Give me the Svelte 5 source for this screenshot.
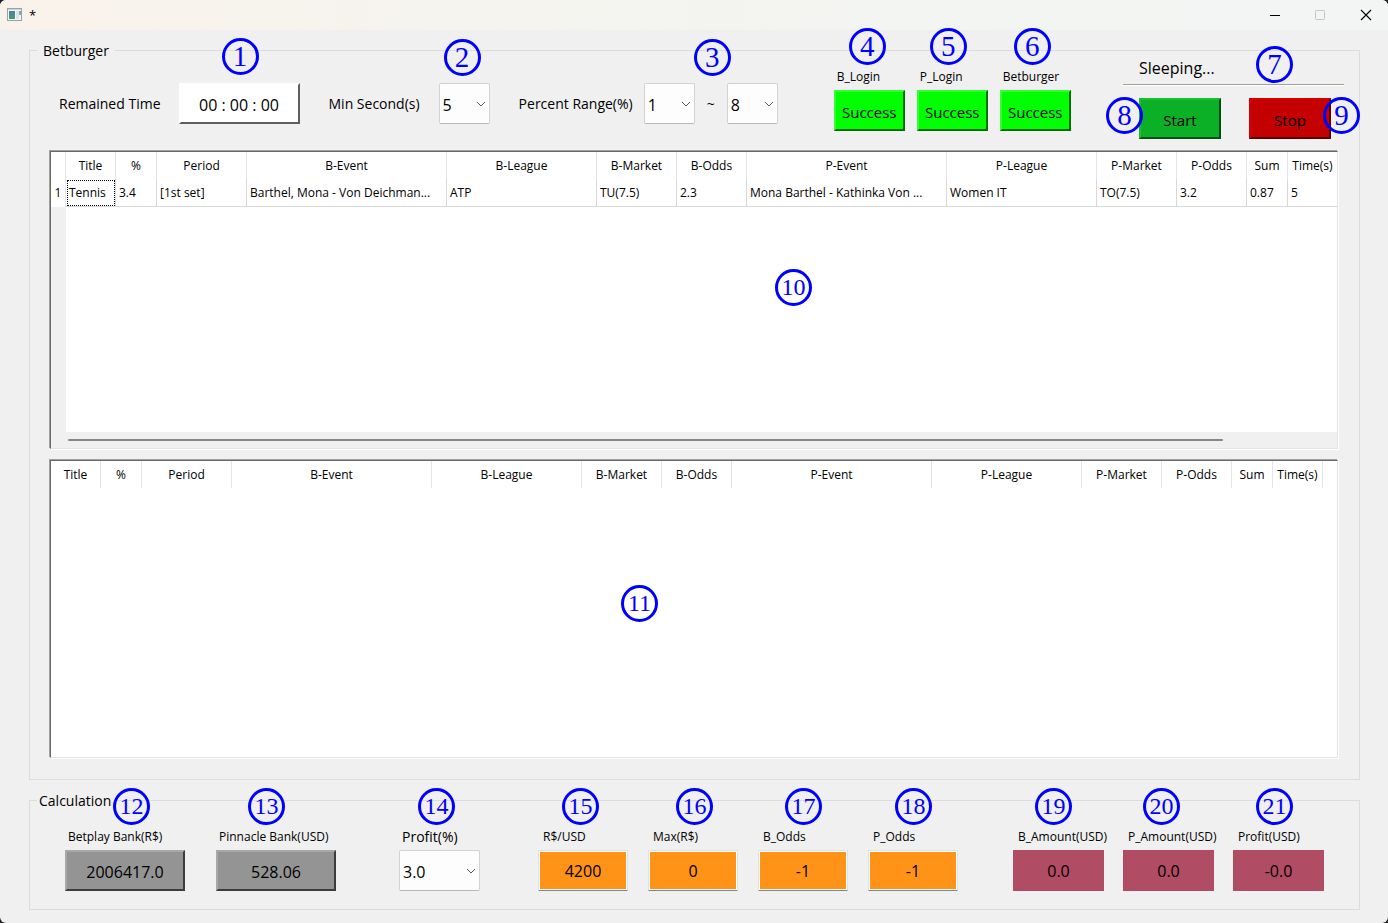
<script>
  const headings = ['Title', '%', 'Period', 'B-Event', 'B-League', 'B-Market', 'B-Odds', 'P-Event', 'P-League', 'P-Market', 'P-Odds', 'Sum', 'Time(s)'];
  const widths = [50, 41, 90, 200, 150, 80, 70, 200, 150, 80, 70, 41, 50];
  const rowHeadWidth = 15;
  const total = widths.reduce((sum, w) => sum + w, 0);
  const rows = [
    ['Tennis', '3.4', '[1st set]', 'Barthel, Mona - Von Deichman...', 'ATP', 'TU(7.5)', '2.3', 'Mona Barthel - Kathinka Von ...', 'Women IT', 'TO(7.5)', '3.2', '0.87', '5']
  ];

  // note: number of the callout, at: its left and top inside the field
  const logins = [
    { id: 'b-login', label: 'B_Login', note: 4, at: [15, -39] },
    { id: 'p-login', label: 'P_Login', note: 5, at: [13, -39] },
    { id: 'betburger', label: 'Betburger', note: 6, at: [14, -39] }
  ];
  const banks = [
    { id: 'betplay', label: 'Betplay Bank(R$)', value: '2006417.0', note: 12, at: [48, -39] },
    { id: 'pinnacle', label: 'Pinnacle Bank(USD)', value: '528.06', note: 13, at: [32, -39] }
  ];
  const stakes = [
    { id: 'rate', label: 'R$/USD', value: '4200', note: 15, at: [24, -39] },
    { id: 'max', label: 'Max(R$)', value: '0', note: 16, at: [28, -39] },
    { id: 'b-odds', label: 'B_Odds', value: '-1', note: 17, at: [27, -39] },
    { id: 'p-odds', label: 'P_Odds', value: '-1', note: 18, at: [27, -39] }
  ];
  const results = [
    { id: 'b-amount', label: 'B_Amount(USD)', value: '0.0', note: 19, at: [22, -39] },
    { id: 'p-amount', label: 'P_Amount(USD)', value: '0.0', note: 20, at: [20, -39] },
    { id: 'profit-usd', label: 'Profit(USD)', value: '-0.0', note: 21, at: [23, -39] }
  ];
</script>

{#snippet callout(n, at)}
  <span class="callout" class:wide={n > 9} style="left: {at[0]}px; top: {at[1]}px">{n}</span>
{/snippet}

{#snippet combo(id, value)}
  <span class="combo">
    <select {id}><option>{value}</option></select>
    <svg width="10" height="6" viewBox="0 0 10 6" aria-hidden="true"><path d="M1 1l4 4 4-4" fill="none" stroke="#555" /></svg>
  </span>
{/snippet}

<div class="window">
  <header>
    <svg width="16" height="14" viewBox="0 0 16 14" aria-hidden="true">
      <defs>
        <linearGradient id="pane" x1="0" y1="0" x2="0" y2="1">
          <stop offset="0" stop-color="#4a7fb0" /><stop offset="1" stop-color="#4f9a6c" />
        </linearGradient>
      </defs>
      <rect x=".5" y=".5" width="14" height="12" fill="#f2f4f5" stroke="#9aa2a8" />
      <rect x="1" y="1" width="13" height="1" fill="#c9d3da" />
      <rect x="2" y="3" width="6" height="8" fill="url(#pane)" />
      <rect x="9" y="3" width="3" height="8" fill="#dfe3e4" />
      <rect x="12" y="3" width="2" height="4" fill="url(#pane)" opacity=".7" />
    </svg>
    <span class="title">*</span>
    <div class="controls">
      <button aria-label="Minimize"><svg width="12" height="12" viewBox="0 0 12 12"><path d="M0 6.5h10" stroke="#000" /></svg></button>
      <button aria-label="Maximize" disabled><svg width="12" height="12" viewBox="0 0 12 12"><rect x=".5" y="1.5" width="9" height="9" rx="1" fill="none" stroke="#c3c5c5" /></svg></button>
      <button aria-label="Close"><svg width="12" height="12" viewBox="0 0 12 12"><path d="M1 1l10 10M11 1L1 11" stroke="#000" stroke-width="1.1" /></svg></button>
    </div>
  </header>

  <fieldset class="scanner">
    <legend>Betburger</legend>
    <div class="toolbar">
      <div class="setting time">
        <label for="remained">Remained Time</label>
        <div class="slot">
          <output id="remained" class="box clock">00 : 00 : 00</output>
          {@render callout(1, [43, -45])}
        </div>
      </div>
      <div class="setting seconds">
        <label for="min-second">Min Second(s)</label>
        <div class="slot">
          {@render combo('min-second', '5')}
          {@render callout(2, [5, -44])}
        </div>
      </div>
      <div class="setting percent">
        <label for="percent-from">Percent Range(%)</label>
        <div class="slot range">
          {@render combo('percent-from', '1')}
          <label for="percent-to">~</label>
          {@render combo('percent-to', '8')}
          {@render callout(3, [50, -44])}
        </div>
      </div>

      <div class="logins">
        {#each logins as f}
          <div class="field">
            <label for={f.id}>{f.label}</label>
            <output id={f.id} class="box success">Success</output>
            {@render callout(f.note, f.at)}
          </div>
        {/each}
      </div>

      <div class="run">
        <output class="state">Sleeping...</output>
        {@render callout(7, [133, -14])}
        <div class="actions">
          <div class="slot">
            <button class="box start">Start</button>
            {@render callout(8, [-33, -1])}
          </div>
          <div class="slot">
            <button class="box stop">Stop</button>
            {@render callout(9, [74, -1])}
          </div>
        </div>
      </div>
    </div>

    <div class="grids">
      <div class="sunken">
        <div class="view strip">
          <table style="width: {total + rowHeadWidth}px">
            <colgroup>
              <col style="width: {rowHeadWidth}px" />
              {#each widths as w}<col style="width: {w}px" />{/each}
            </colgroup>
            <thead>
              <tr><td></td>{#each headings as h}<th scope="col">{h}</th>{/each}</tr>
            </thead>
            <tbody>
              {#each rows as row, r}
                <tr>
                  <th scope="row">{r + 1}</th>
                  {#each row as cell, c}<td class:focus={r === 0 && c === 0}>{cell}</td>{/each}
                </tr>
              {/each}
            </tbody>
          </table>
        </div>
        <div class="scroll"><div class="thumb"></div></div>
        {@render callout(10, [724, 117])}
      </div>
      <div class="sunken">
        <div class="view">
          <table style="width: {total}px">
            <colgroup>
              {#each widths as w}<col style="width: {w}px" />{/each}
            </colgroup>
            <thead>
              <tr>{#each headings as h}<th scope="col">{h}</th>{/each}</tr>
            </thead>
          </table>
        </div>
        {@render callout(11, [570, 124])}
      </div>
    </div>
  </fieldset>

  <fieldset class="calculation">
    <legend>Calculation</legend>
    <div class="fields">
      <div class="group banks">
        {#each banks as f}
          <div class="field">
            <label for={f.id}>{f.label}</label>
            <output id={f.id} class="box bank">{f.value}</output>
            {@render callout(f.note, f.at)}
          </div>
        {/each}
      </div>
      <div class="field profit">
        <label for="profit">Profit(%)</label>
        {@render combo('profit', '3.0')}
        {@render callout(14, [19, -39])}
      </div>
      <div class="group stakes">
        {#each stakes as f}
          <div class="field">
            <label for={f.id}>{f.label}</label>
            <input id={f.id} class="box stake" value={f.value} />
            {@render callout(f.note, f.at)}
          </div>
        {/each}
      </div>
      <div class="group results">
        {#each results as f}
          <div class="field">
            <label for={f.id}>{f.label}</label>
            <output id={f.id} class="box result">{f.value}</output>
            {@render callout(f.note, f.at)}
          </div>
        {/each}
      </div>
    </div>
  </fieldset>
</div>

<style>
  :global(body) {
    margin: 0;
    background: #222;
  }
  .window, .window :is(button, input, select) {
    font-family: 'Open Sans', 'Segoe UI', sans-serif;
    color: #000;
  }
  .window {
    box-sizing: border-box;
    display: flex;
    flex-direction: column;
    gap: 10px;
    min-height: 100vh;
    padding-bottom: 13px;
    border-radius: 6px;
    background: #f0f0f0;
    overflow: hidden;
    font-size: 14px;
  }
  .window * {
    box-sizing: border-box;
  }

  header {
    display: flex;
    align-items: center;
    height: 30px;
    padding-left: 7px;
    background: linear-gradient(90deg, #f9f2eb, #f3f4f0 50%, #f2f5f4);
  }
  .title {
    margin-left: 6px;
    font-size: 13px;
  }
  .controls {
    display: flex;
    margin-left: auto;
  }
  .controls button {
    display: grid;
    place-items: center;
    width: 45px;
    height: 28px;
    padding: 0;
    border: 0;
    background: none;
  }

  fieldset {
    min-width: 0;
    margin: 0 28px 0 29px;
    padding: 0;
    border: 1px solid #dcdcdc;
  }
  legend {
    height: 20px;
    margin-left: 7px;
    padding: 0 6px;
    line-height: 22px;
  }
  .calculation legend {
    padding: 0 2px;
  }
  .scanner {
    flex: 1;
    padding: 0 20px 20px 19px;
  }
  .scanner legend {
    margin-left: -12px;
  }

  .toolbar {
    display: flex;
    align-items: flex-start;
    height: 90px;
    margin-right: -5px;
    padding-left: 10px;
    white-space: nowrap;
  }
  .setting {
    display: flex;
    align-items: center;
    margin-top: 23px;
  }
  .time { gap: 18px; }
  .seconds { gap: 19px; margin-left: 29px; }
  .percent { gap: 11px; margin-left: 29px; }
  .slot, .field, .run, .sunken {
    position: relative;
  }
  .range {
    display: flex;
    align-items: center;
    gap: 12px;
  }

  .box {
    display: block;
    height: 41px;
    padding: 3px 0 0;
    border: 2px solid;
    border-radius: 0;
    font-size: 16px;
    line-height: 34px;
    text-align: center;
  }
  .clock {
    width: 121px;
    border-color: #fff #5f5f5f #5f5f5f #fff;
    background: #fff;
  }
  .combo {
    position: relative;
    display: block;
    width: 51px;
    height: 41px;
  }
  .combo select {
    display: block;
    appearance: none;
    width: 100%;
    height: 100%;
    padding: 3px 0 0 3px;
    border: 1px solid #d2d2d2;
    border-bottom-color: #b8b8b8;
    border-radius: 2px;
    background: #fdfdfd;
    font-size: 16px;
  }
  .combo svg {
    position: absolute;
    right: 4px;
    top: 18px;
    pointer-events: none;
  }

  .logins {
    display: flex;
    gap: 12px;
    margin: 7px 0 0 56px;
  }
  .field label {
    display: block;
    height: 20px;
    margin-bottom: 3px;
    padding-left: 3px;
    font-size: 12px;
    line-height: 20px;
    white-space: nowrap;
  }
  .success {
    width: 71px;
    border-color: #3f3 #007000 #007000 #3f3;
    background: #0f0;
    font-size: 15px;
  }

  .run {
    width: 221px;
    margin-left: auto;
  }
  .state {
    display: block;
    height: 25px;
    padding-left: 16px;
    border-bottom: 1px solid #a0a0a0;
    box-shadow: 0 1px 0 #fff;
    font-size: 16px;
    line-height: 16px;
  }
  .actions {
    display: flex;
    gap: 28px;
    padding: 13px 0 0 16px;
  }
  .start, .stop {
    width: 82px;
    font-size: 15px;
  }
  .start {
    border-color: #18c030 #064f12 #064f12 #18c030;
    background: #0cb026;
  }
  .stop {
    border-color: #d40000 #5a0000 #5a0000 #d40000;
    background: #c40000;
  }

  .grids {
    display: flex;
    flex-direction: column;
    gap: 11px;
    min-height: calc(100vh - 314px);
    padding: 1px;
  }
  .sunken {
    flex: 1 0 260px;
    display: flex;
    flex-direction: column;
    border: 1px solid;
    border-color: #696969 #e3e3e3 #e3e3e3 #696969;
    box-shadow: -1px -1px 0 #a0a0a0, 1px 1px 0 #fff;
    background: #fff;
  }
  .view {
    flex: 1;
    overflow: hidden;
  }
  .strip {
    background: linear-gradient(90deg, #f0f0f0 15px, #fff 15px);
  }
  table {
    table-layout: fixed;
    border-collapse: separate;
    border-spacing: 0;
    font-size: 12px;
    background: #fff;
  }
  th, td {
    height: 28px;
    padding: 0 0 0 3px;
    border-right: 1px solid #d8d8d8;
    font-weight: 400;
    line-height: 16px;
    text-align: left;
    white-space: nowrap;
    overflow: hidden;
  }
  thead th, thead td {
    height: 27px;
    padding: 1px 0 0;
    border-color: #e5e5e5;
    text-align: center;
  }
  tbody td {
    border-bottom: 1px solid #d8d8d8;
  }
  tbody th {
    padding: 0;
    border-color: #e5e5e5;
    text-align: center;
  }
  tbody td.focus {
    outline: 1px dotted #000;
    outline-offset: -2px;
  }
  .scroll {
    height: 16px;
    padding: 7px 114px 0 17px;
    background: #f0f0f0;
  }
  .thumb {
    height: 2px;
    border-radius: 1px;
    background: #868686;
  }

  .fields {
    display: flex;
    padding: 17px 35px 18px 35px;
  }
  .group {
    display: flex;
  }
  .banks { gap: 31px; }
  .bank {
    width: 120px;
    border-color: #a8a8a8 #3c3c3c #3c3c3c #a8a8a8;
    background: #949494;
  }
  .profit { margin-left: 63px; }
  .profit .combo { width: 81px; }
  .profit label { font-size: 14px; }
  .stakes {
    gap: 20px;
    margin-left: 58px;
  }
  .stakes label, .results label { padding-left: 5px; }
  .stake {
    width: 90px;
    padding-top: 1px;
    border: 1px solid #e3e3e3;
    border-bottom-color: #868686;
    background: #ff9318;
    box-shadow: inset 0 0 0 1px #fff;
  }
  .results {
    gap: 19px;
    margin-left: auto;
  }
  .results .field { width: 91px; }
  .result {
    padding-top: 2px;
    border-color: #b04c64;
    background: #b04c64;
  }

  .callout {
    position: absolute;
    z-index: 1;
    width: 37px;
    height: 37px;
    border: 3px solid #00f;
    border-radius: 50%;
    color: #00f;
    font: 29px/31px 'Liberation Serif', 'Times New Roman', serif;
    text-align: center;
    pointer-events: none;
  }
  .callout.wide {
    font-size: 24px;
  }
</style>
